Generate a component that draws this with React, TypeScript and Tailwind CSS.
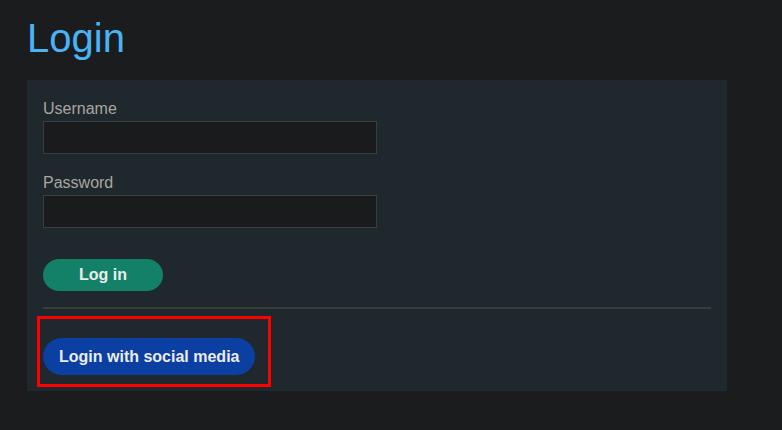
export default function App() {
  return (
    <div className="min-h-[430px] w-full bg-[#1b1c1e] pl-[27px] pt-[18px] font-['Liberation_Sans',Arial,sans-serif]">
      <h1 className="text-[40px] leading-[40px] text-[#4ab3f6]">Login</h1>
      <div className="mt-[22px] w-[700px] bg-[#1e282d] px-4 pt-[17px] pb-4">
        <label className="block text-base leading-6 text-[#a9a69f]">Username</label>
        <input className="block h-[33px] w-[334px] border border-[#3a3e3e] bg-[#1a1b1d] px-2 text-white outline-none" />
        <label className="mt-[17px] block text-base leading-6 text-[#a9a69f]">Password</label>
        <input type="password" className="block h-[33px] w-[334px] border border-[#3a3e3e] bg-[#1a1b1d] px-2 text-white outline-none" />
        <button className="mt-[31px] h-8 w-[120px] rounded-full bg-[#138068] text-base font-bold text-[#ececec]">
          Log in
        </button>
        <hr className="mt-4 h-[2px] w-[668px] border-0 bg-[#393d3d]" />
        <div className="relative mt-[29px] w-fit">
          <button className="h-[37px] rounded-full bg-[#0b3fa2] px-4 text-base font-bold text-[#ececec]">
            Login with social media
          </button>
          <div className="pointer-events-none absolute -top-[22px] -right-[16px] -bottom-[12px] -left-[6px] border-[3px] border-[#ff0000]" />
        </div>
      </div>
    </div>
  );
}
